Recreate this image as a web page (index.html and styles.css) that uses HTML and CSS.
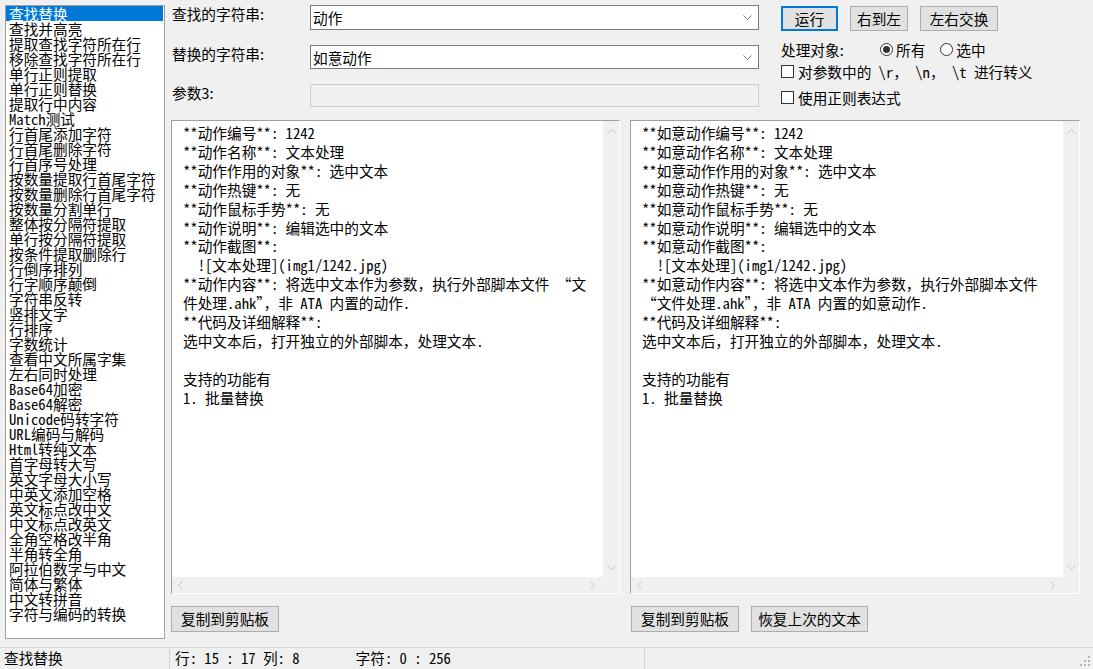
FILE: index.html
```html
<!DOCTYPE html>
<html lang="zh-CN">
<head>
  <meta charset="UTF-8">
  <title>查找替换</title>
  <link rel="stylesheet" href="styles.css">
</head>
<body>
<div class="window">
  <div class="main">
    <ul class="func-list">
      <li class="selected">查找替换</li>
      <li>查找并高亮</li>
      <li>提取查找字符所在行</li>
      <li>移除查找字符所在行</li>
      <li>单行正则提取</li>
      <li>单行正则替换</li>
      <li>提取行中内容</li>
      <li>Match测试</li>
      <li>行首尾添加字符</li>
      <li>行首尾删除字符</li>
      <li>行首序号处理</li>
      <li>按数量提取行首尾字符</li>
      <li>按数量删除行首尾字符</li>
      <li>按数量分割单行</li>
      <li>整体按分隔符提取</li>
      <li>单行按分隔符提取</li>
      <li>按条件提取删除行</li>
      <li>行倒序排列</li>
      <li>行字顺序颠倒</li>
      <li>字符串反转</li>
      <li>竖排文字</li>
      <li>行排序</li>
      <li>字数统计</li>
      <li>查看中文所属字集</li>
      <li>左右同时处理</li>
      <li>Base64加密</li>
      <li>Base64解密</li>
      <li>Unicode码转字符</li>
      <li>URL编码与解码</li>
      <li>Html转纯文本</li>
      <li>首字母转大写</li>
      <li>英文字母大小写</li>
      <li>中英文添加空格</li>
      <li>英文标点改中文</li>
      <li>中文标点改英文</li>
      <li>全角空格改半角</li>
      <li>半角转全角</li>
      <li>阿拉伯数字与中文</li>
      <li>简体与繁体</li>
      <li>中文转拼音</li>
      <li>字符与编码的转换</li>
    </ul>

    <div class="content">
      <div class="top">
        <div class="fields">
          <label class="field-label">查找的字符串:</label>
          <div class="combo">
            <span>动作</span>
            <svg class="combo-arrow" width="9" height="5" viewBox="0 0 9 5"><polyline points="0.5,0.5 4.5,4.5 8.5,0.5" fill="none" stroke="#7a7a7a"/></svg>
          </div>
          <label class="field-label">替换的字符串:</label>
          <div class="combo">
            <span>如意动作</span>
            <svg class="combo-arrow" width="9" height="5" viewBox="0 0 9 5"><polyline points="0.5,0.5 4.5,4.5 8.5,0.5" fill="none" stroke="#7a7a7a"/></svg>
          </div>
          <label class="field-label label-param">参数3:</label>
          <div class="param-box"></div>
        </div>

        <div class="actions">
          <div class="btn-row">
            <button class="btn btn-default btn-run">运行</button>
            <button class="btn btn-rtl">右到左</button>
            <button class="btn btn-swap">左右交换</button>
          </div>
          <div class="target-row">
            <span class="target-label">处理对象:</span>
            <span class="radio checked"></span><span class="radio-text">所有</span>
            <span class="radio"></span><span class="radio-text">选中</span>
          </div>
          <div class="check-row check-escape"><span class="checkbox"></span>对参数中的 \r， \n， \t 进行转义</div>
          <div class="check-row check-regex"><span class="checkbox"></span>使用正则表达式</div>
        </div>
      </div>

      <div class="editors">
        <div class="editor editor-left">
          <div class="editor-text">**动作编号**: 1242
**动作名称**: 文本处理
**动作作用的对象**: 选中文本
**动作热键**: 无
**动作鼠标手势**: 无
**动作说明**: 编辑选中的文本
**动作截图**:
  ![文本处理](img1/1242.jpg)
**动作内容**: 将选中文本作为参数，执行外部脚本文件 “文
件处理.ahk”，非 ATA 内置的动作.
**代码及详细解释**:
选中文本后，打开独立的外部脚本，处理文本.

支持的功能有
1. 批量替换</div>
          <div class="vscroll">
            <svg width="9" height="5" viewBox="0 0 9 5"><polyline points="0.5,4.5 4.5,0.5 8.5,4.5" fill="none" stroke="#c2c2c2"/></svg>
            <svg width="9" height="5" viewBox="0 0 9 5"><polyline points="0.5,0.5 4.5,4.5 8.5,0.5" fill="none" stroke="#c2c2c2"/></svg>
          </div>
          <div class="hscroll">
            <svg width="5" height="9" viewBox="0 0 5 9"><polyline points="4.5,0.5 0.5,4.5 4.5,8.5" fill="none" stroke="#c2c2c2"/></svg>
            <svg width="5" height="9" viewBox="0 0 5 9"><polyline points="0.5,0.5 4.5,4.5 0.5,8.5" fill="none" stroke="#c2c2c2"/></svg>
          </div>
          <div class="corner"></div>
        </div>

        <div class="editor editor-right">
          <div class="editor-text">**如意动作编号**: 1242
**如意动作名称**: 文本处理
**如意动作作用的对象**: 选中文本
**如意动作热键**: 无
**如意动作鼠标手势**: 无
**如意动作说明**: 编辑选中的文本
**如意动作截图**:
  ![文本处理](img1/1242.jpg)
**如意动作内容**: 将选中文本作为参数，执行外部脚本文件
“文件处理.ahk”，非 ATA 内置的如意动作.
**代码及详细解释**:
选中文本后，打开独立的外部脚本，处理文本.

支持的功能有
1. 批量替换</div>
          <div class="vscroll">
            <svg width="9" height="5" viewBox="0 0 9 5"><polyline points="0.5,4.5 4.5,0.5 8.5,4.5" fill="none" stroke="#c2c2c2"/></svg>
            <svg width="9" height="5" viewBox="0 0 9 5"><polyline points="0.5,0.5 4.5,4.5 8.5,0.5" fill="none" stroke="#c2c2c2"/></svg>
          </div>
          <div class="hscroll">
            <svg width="5" height="9" viewBox="0 0 5 9"><polyline points="4.5,0.5 0.5,4.5 4.5,8.5" fill="none" stroke="#c2c2c2"/></svg>
            <svg width="5" height="9" viewBox="0 0 5 9"><polyline points="0.5,0.5 4.5,4.5 0.5,8.5" fill="none" stroke="#c2c2c2"/></svg>
          </div>
          <div class="corner"></div>
        </div>
      </div>

      <div class="bottom-buttons">
        <div class="pane-buttons pane-left">
          <button class="btn btn-copy">复制到剪贴板</button>
        </div>
        <div class="pane-buttons pane-right">
          <button class="btn btn-copy">复制到剪贴板</button>
          <button class="btn btn-restore">恢复上次的文本</button>
        </div>
      </div>
    </div>
  </div>

  <div class="statusbar">
    <div class="status-cell status-name">查找替换</div>
    <div class="status-cell status-pos">
      <span class="pos-line">行: 15 : 17 列: 8</span>
      <span class="pos-chars">字符: 0 : 256</span>
    </div>
    <div class="status-cell status-rest">
      <svg class="grip" width="11" height="11" viewBox="0 0 11 11">
        <rect x="8" y="0" width="2" height="2" fill="#b4b4b4"/>
        <rect x="4" y="4" width="2" height="2" fill="#b4b4b4"/>
        <rect x="8" y="4" width="2" height="2" fill="#b4b4b4"/>
        <rect x="0" y="8" width="2" height="2" fill="#b4b4b4"/>
        <rect x="4" y="8" width="2" height="2" fill="#b4b4b4"/>
        <rect x="8" y="8" width="2" height="2" fill="#b4b4b4"/>
      </svg>
    </div>
  </div>
</div>
</body>
</html>
```

FILE: styles.css
```css
body {
  margin: 0;
  background-color: #f0f0f0;
  font-family: "Noto Sans CJK SC", sans-serif;
  font-size: 14.67px;
  color: #000;
}

.window {
  width: 1093px;
  height: 669px;
  display: flex;
  flex-direction: column;
  overflow: hidden;
}

.main {
  display: flex;
  height: 647px;
}

/* left function list */

.func-list {
  list-style: none;
  margin: 5px 0 0 5px;
  padding: 0;
  width: 160px;
  height: 634px;
  box-sizing: border-box;
  background: white;
  border: 1px solid #a0a0a0;
  font-family: "Noto Sans Mono CJK SC", "Noto Sans CJK SC", monospace;
  font-size: 14.67px;
}

.func-list li {
  height: 15px;
  line-height: 15px;
  padding-left: 3px;
  margin-right: 1px;
  white-space: nowrap;
}

.func-list li.selected {
  background-color: #0078d7;
  color: white;
}

.content {
  margin-left: 6px;
  display: flex;
  flex-direction: column;
}

/* top controls */

.top {
  display: flex;
  height: 120px;
}

.fields {
  display: grid;
  grid-template-columns: 139px 449px;
  grid-template-rows: 25px 24px 23px;
  row-gap: 15px;
  padding-top: 5px;
}

.field-label {
  align-self: start;
  line-height: 18px;
  padding-left: 1px;
  white-space: nowrap;
}

.combo {
  display: flex;
  align-items: center;
  justify-content: space-between;
  background: white;
  border: 1px solid #7a7a7a;
  padding: 0 6px 0 2px;
  box-sizing: border-box;
}

.combo-arrow {
  display: block;
}

.param-box {
  background: #f0f0f0;
  border: 1px solid #cccccc;
  box-sizing: border-box;
}

.actions {
  margin-left: 22px;
  padding-top: 6px;
}

.btn {
  font-family: "Noto Sans CJK SC", sans-serif;
  font-size: 14.67px;
  color: #000;
  background-color: #e1e1e1;
  border: 1px solid #adadad;
  padding: 0;
  height: 25px;
  box-sizing: border-box;
  line-height: 22px;
}

.btn-default {
  border-color: #0078d7;
  box-shadow: inset 0 0 0 1px #0078d7;
}

.btn-row {
  display: flex;
  gap: 12px;
}

.btn-run {
  width: 57px;
}

.btn-rtl {
  width: 58px;
}

.btn-swap {
  width: 78px;
}

.target-row {
  display: flex;
  align-items: center;
  height: 18px;
  margin-top: 9px;
}

.target-label {
  width: 99px;
}

.radio {
  width: 13px;
  height: 13px;
  box-sizing: border-box;
  border: 1px solid #333;
  border-radius: 50%;
  background: white;
  display: flex;
  align-items: center;
  justify-content: center;
}

.radio.checked::after {
  content: "";
  width: 7px;
  height: 7px;
  border-radius: 50%;
  background: #333;
}

.radio-text {
  margin-left: 3px;
  margin-right: 15px;
}

.check-row {
  display: flex;
  align-items: center;
  height: 18px;
  margin-top: 4px;
  white-space: pre;
}

.check-escape {
  font-family: "Noto Sans Mono CJK SC", "Noto Sans CJK SC", monospace;
}

.check-regex {
  margin-top: 8px;
}

.checkbox {
  width: 13px;
  height: 13px;
  box-sizing: border-box;
  border: 1px solid #333;
  background: white;
  margin-right: 4px;
}

/* editors */

.editors {
  display: flex;
  gap: 10px;
  height: 474px;
}

.editor {
  display: grid;
  grid-template-columns: 1fr 16px;
  grid-template-rows: 1fr 16px;
  box-sizing: border-box;
  border: 1px solid;
  border-color: #a0a0a0 #ffffff #ffffff #a0a0a0;
  background: white;
}

.editor-left {
  width: 449px;
}

.editor-right {
  width: 450px;
}

.editor-text {
  padding: 3px 0 0 11px;
  white-space: pre;
  line-height: 18.9px;
  font-family: "Noto Sans Mono CJK SC", "Noto Sans CJK SC", monospace;
  font-size: 14.67px;
}

.vscroll {
  background: #f0f0f0;
  display: flex;
  flex-direction: column;
  justify-content: space-between;
  align-items: center;
  padding: 8px 0 7px;
}

.hscroll {
  background: #f0f0f0;
  display: flex;
  justify-content: space-between;
  align-items: center;
  padding: 0 8px 0 6px;
}

.vscroll svg,
.hscroll svg {
  display: block;
}

.corner {
  background: #f0f0f0;
}

.bottom-buttons {
  display: flex;
  gap: 10px;
  margin-top: 12px;
}

.pane-buttons {
  display: flex;
  gap: 12px;
}

.pane-left {
  width: 449px;
}

.pane-right {
  padding-left: 1px;
}

.btn-copy {
  width: 108px;
  height: 26px;
}

.btn-restore {
  width: 117px;
  height: 26px;
}

/* status bar */

.statusbar {
  display: flex;
  height: 22px;
  box-sizing: border-box;
  border-top: 1px solid #d9d9d9;
  line-height: 20px;
}

.status-cell {
  white-space: pre;
}

.status-name {
  width: 165px;
  padding-left: 4px;
  border-right: 1px solid #d0d0d0;
}

.status-pos {
  width: 469px;
  padding-left: 5px;
  border-right: 1px solid #d0d0d0;
  display: flex;
  font-family: "Noto Sans Mono CJK SC", "Noto Sans CJK SC", monospace;
}

.pos-chars {
  margin-left: 56px;
}

.status-rest {
  flex: 1;
  display: flex;
  justify-content: flex-end;
  align-items: flex-end;
  padding: 0 2px 2px 0;
}

.grip {
  display: block;
}
```
